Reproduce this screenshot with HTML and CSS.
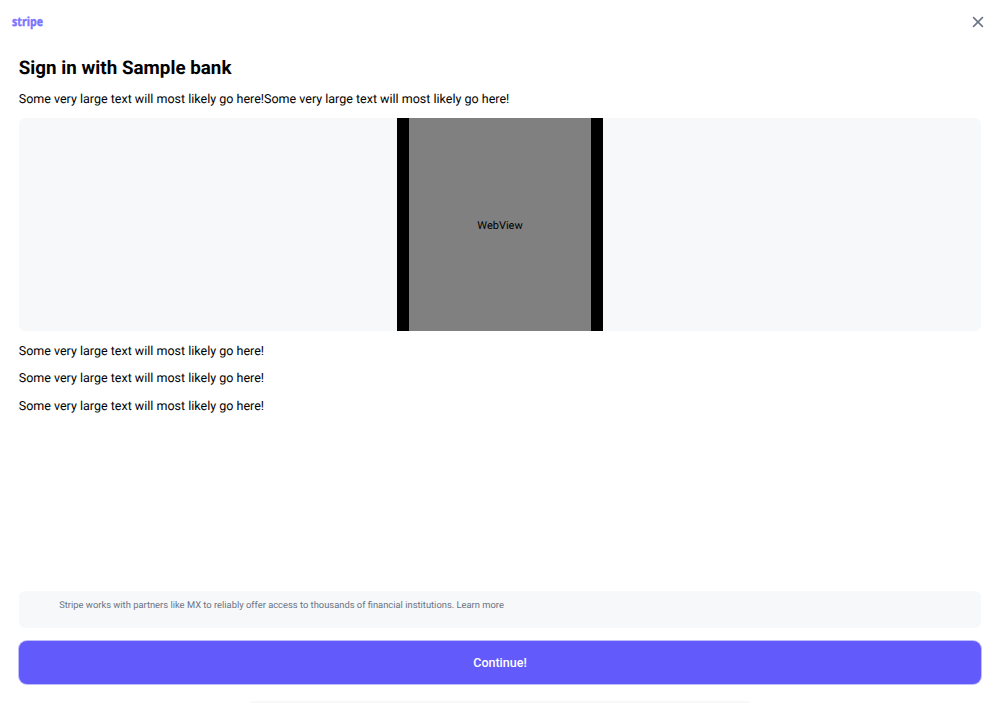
FILE: index.html
```html
<!DOCTYPE html>
<html lang="en">
<head>
<meta charset="utf-8">
<title>Sign in with Sample bank</title>
<link rel="stylesheet" href="styles.css">
</head>
<body>
<div class="screen">
  <header class="topbar">
    <svg class="logo" width="34" height="24" viewBox="0 0 34 24"><text x="0" y="15.5" textLength="31" lengthAdjust="spacingAndGlyphs">stripe</text></svg>
    <button class="close" aria-label="Close">
      <svg width="12" height="12" viewBox="0 0 12 12"><path d="M1.1 1.1 10.9 10.9M10.9 1.1 1.1 10.9"/></svg>
    </button>
  </header>
  <main class="content">
    <h1 class="title">Sign in with Sample bank</h1>
    <p class="text">Some very large text will most likely go here!Some very large text will most likely go here!</p>
    <div class="preview"><div class="phone"><div class="webview">WebView</div></div></div>
    <p class="text">Some very large text will most likely go here!</p>
    <p class="text">Some very large text will most likely go here!</p>
    <p class="text">Some very large text will most likely go here!</p>
  </main>
  <footer class="footer">
    <div class="notice"><span class="notice-text">Stripe works with partners like MX to reliably offer access to thousands of financial institutions. Learn more</span></div>
    <button class="cta">Continue!</button>
    <div class="handle"></div>
  </footer>
</div>
</body>
</html>
```
FILE: styles.css
```css
* { box-sizing: border-box; margin: 0; }
body { background: #fff; color: #000; font-family: Roboto, sans-serif; text-rendering: geometricPrecision; }
button { border: 0; padding: 0; font-family: inherit; }
.screen { height: 703px; display: flex; flex-direction: column; overflow: hidden; }
.topbar { height: 44px; padding: 0 16px 0 12px; display: flex; align-items: center; justify-content: space-between; }
.logo { overflow: visible; }
.logo text { font: 700 12.5px "Open Sans", sans-serif; fill: #7a73ff; stroke: #7a73ff; stroke-width: 0.4; }
.close { display: flex; background: none; }
.close path { fill: none; stroke: #6a7383; stroke-width: 1.5; }
.content { flex: 1; padding: 13px 18.75px 0; }
.title { font-size: 18.75px; line-height: 23px; font-weight: 700; margin-bottom: 11.3px; letter-spacing: 0.03px; }
.text { font-size: 12.5px; line-height: 18.75px; margin-bottom: 8.6px; white-space: nowrap; letter-spacing: 0.004px; }
.content > .text:nth-child(2) { margin-bottom: 8.3px; }
.preview { height: 212.5px; margin: 0 0 12.2px; border-radius: 6px; background: #f6f8fa; display: flex; justify-content: center; }
.phone { width: 206px; padding: 0 12px; background: #000; }
.webview { height: 100%; padding-top: 2px; background: #808080; font-size: 11px; display: flex; align-items: center; justify-content: center; }
.footer { padding: 0 18.75px; display: flex; flex-direction: column; }
.notice { height: 37.5px; padding: 8.8px 40.5px; border-radius: 6px; background: #f6f8fa; }
.notice-text { display: block; font-size: 9.375px; line-height: 13px; color: #6a7383; white-space: nowrap; }
.cta { height: 43px; margin-top: 12.5px; border-radius: 8px; background: #625afa; box-shadow: 0 0 0 1px rgba(98, 90, 250, 0.4); color: #fff; font-size: 12.5px; font-weight: 500; }
.handle { width: 500px; height: 2px; margin-top: 17.5px; align-self: center; border-radius: 2px 2px 0 0; background: #f8f8f8; }
```
